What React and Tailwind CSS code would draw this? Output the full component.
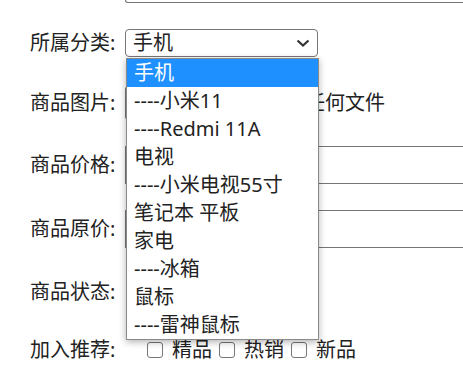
const options = [
  '手机',
  '----小米11',
  '----Redmi 11A',
  '电视',
  '----小米电视55寸',
  '笔记本 平板',
  '家电',
  '----冰箱',
  '鼠标',
  '----雷神鼠标',
];

const font = { fontFamily: '"Noto Sans", "Noto Sans CJK SC", sans-serif' };

const Label = ({ children }) => (
  <span className="w-[95px] shrink-0 text-[20px] text-[#222]">{children}</span>
);

const Checkbox = ({ text }) => (
  <label className="flex items-center">
    <span className="mr-[9px] h-[16px] w-[16px] rounded-[3px] border border-[#767676] bg-white" />
    <span className="mr-[7px]">{text}</span>
  </label>
);

const App = () => {
  return (
    <div className="relative h-[365px] w-[463px] overflow-hidden bg-white text-[20px] leading-none text-[#222]" style={font}>
      {/* bottom of the textarea above */}
      <div className="ml-[125px] h-[3px] w-[400px] rounded-bl-[3px] border-b border-l border-[#767676]" />

      <div className="pl-[30px]">
        <div className="mt-[26px] flex h-[28px] items-center">
          <Label>所属分类:</Label>
          <div className="flex h-[28px] w-[193px] shrink-0 items-center justify-between rounded-[4px] border border-[#767676] bg-white pl-[7px] pr-[7px]">
            <span>手机</span>
            <svg width="14" height="8" viewBox="0 0 14 8" fill="none">
              <path d="M1.5 1.5 L7 6.5 L12.5 1.5" stroke="#333" strokeWidth="2.2" />
            </svg>
          </div>
        </div>

        <div className="mt-[32px] flex h-[28px] items-center">
          <Label>商品图片:</Label>
          <span className="h-[34px] w-[112px] shrink-0 rounded-[3px] border border-[#767676] bg-[#efefef] text-center text-[20px] leading-[32px]">
            选择文件
          </span>
          <span className="ml-[8px] shrink-0">未选择任何文件</span>
        </div>

        <div className="mt-[29px] flex h-[38px] items-center">
          <Label>商品价格:</Label>
          <div className="h-[38px] w-[360px] shrink-0 border border-[#767676]" />
        </div>

        <div className="mt-[26px] flex h-[38px] items-center">
          <Label>商品原价:</Label>
          <div className="h-[38px] w-[360px] shrink-0 border border-[#767676]" />
        </div>

        <div className="mt-[30px] flex h-[28px] items-center">
          <Label>商品状态:</Label>
        </div>

        <div className="mt-[30px] flex h-[28px] items-center">
          <Label>加入推荐:</Label>
          <div className="ml-[22px] flex items-center">
            <Checkbox text="精品" />
            <Checkbox text="热销" />
            <Checkbox text="新品" />
          </div>
        </div>
      </div>

      {/* open select popup */}
      <div className="absolute left-[126px] top-[58px] w-[193px] border border-[#8a8a8a] bg-white shadow-[0_2px_7px_rgba(0,0,0,0.3)]">
        {options.map((opt, i) => (
          <div
            key={opt}
            className={
              i === 0
                ? 'flex h-[28px] items-center bg-[#1e90ff] pl-[7px] text-white'
                : 'flex h-[28px] items-center pl-[7px] text-[#222]'
            }
          >
            {opt}
          </div>
        ))}
      </div>
    </div>
  );
};

export default App;
